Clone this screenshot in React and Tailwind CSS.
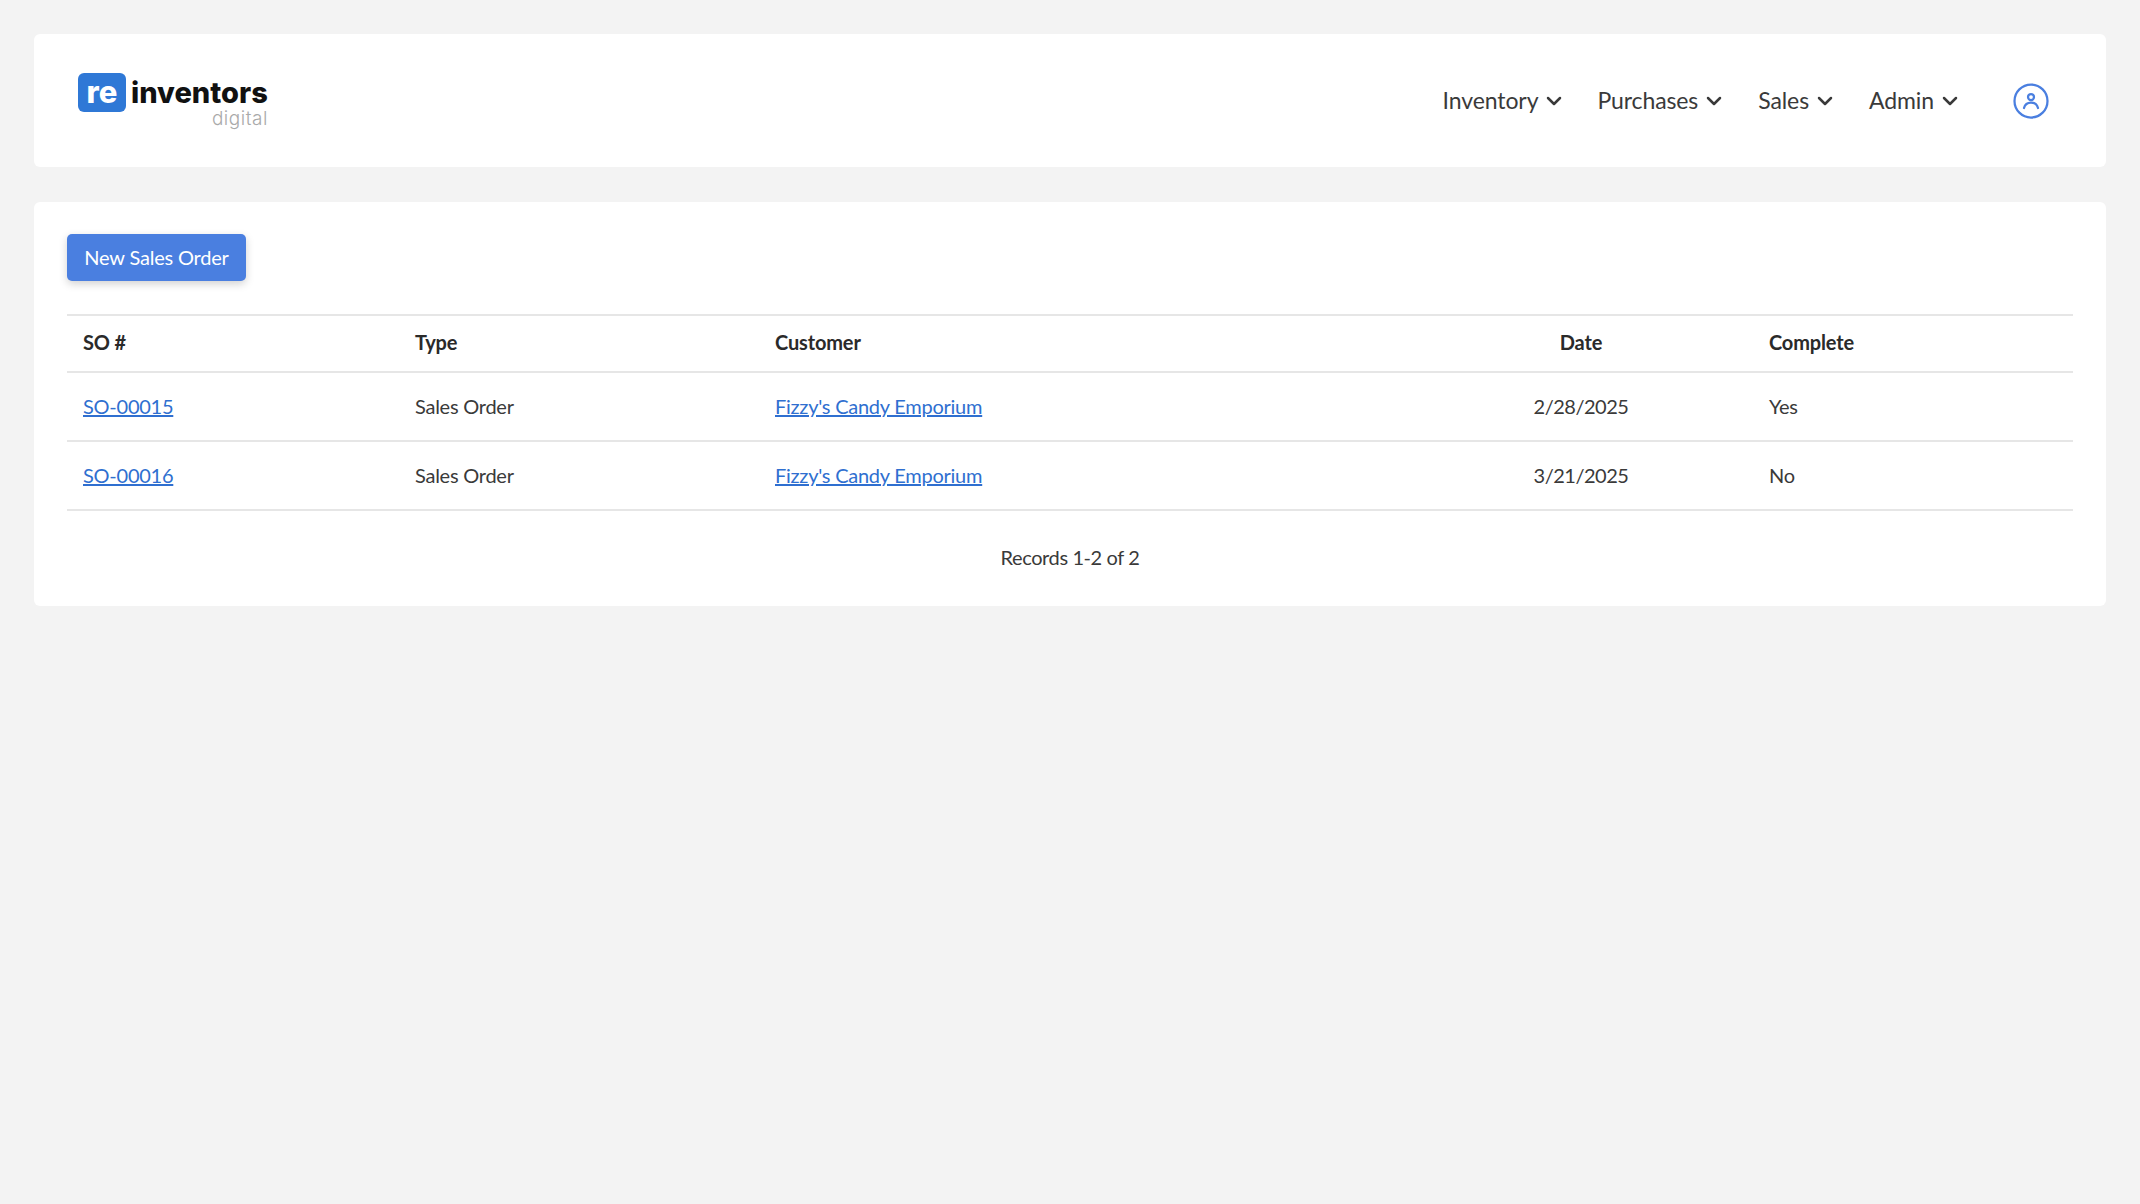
import { ChevronDown } from 'lucide-react'

const NAV = [
  { label: 'Inventory', gap: 'mr-[31px]' },
  { label: 'Purchases', gap: 'mr-[32px]' },
  { label: 'Sales', gap: 'mr-[32px]' },
  { label: 'Admin', gap: 'mr-[51px]' },
]

const ROWS = [
  { so: 'SO-00015', date: '2/28/2025', complete: 'Yes' },
  { so: 'SO-00016', date: '3/21/2025', complete: 'No' },
]

export default function App() {
  return (
    <div className="min-h-[1204px] bg-[#f3f3f3] px-[34px] pt-[34px] font-['Lato','Liberation_Sans',sans-serif] text-[#3a3a3a]">
      <header className="flex h-[133px] items-center justify-between rounded-md bg-white pl-[44px] pr-[57px]">
        <div className="flex flex-col">
          <div className="flex items-center gap-[5px]">
            <span className="flex h-[39px] w-[48px] items-center justify-center rounded-md bg-[#2f78d6] pb-[3px] font-['Inter',sans-serif] text-[31px] font-extrabold leading-none text-white">re</span>
            <span className="font-['Inter',sans-serif] text-[29px] font-extrabold leading-none text-[#111]">inventors</span>
          </div>
          <span className="-mt-[3px] self-end font-['Inter',sans-serif] text-[19px] font-light leading-none tracking-[0.5px] text-[#aaaaaa]">digital</span>
        </div>
        <nav className="flex items-center text-[23px] tracking-[-0.1px]">
          {NAV.map(({ label, gap }) => (
            <span key={label} className={`flex items-center gap-[4px] ${gap}`}>
              {label}
              <ChevronDown size={24} strokeWidth={2.5} />
            </span>
          ))}
          <svg width="36" height="36" viewBox="0 0 36 36" fill="none" stroke="#4a7fe0" strokeWidth="2.25">
            <circle cx="18" cy="18" r="16.5" />
            <circle cx="18" cy="14" r="3" />
            <path d="M11 25c1-4 4-5.5 7-5.5s6 1.5 7 5.5" strokeLinecap="round" />
          </svg>
        </nav>
      </header>

      <main className="mt-[35px] h-[404px] rounded-md bg-white px-[33px] pt-[32px]">
        <button className="h-[47px] w-[179px] rounded-[5px] bg-[#4a7fe0] pb-[2px] text-[20px] tracking-[-0.2px] text-white shadow-[0_3px_8px_rgba(0,0,0,0.18)]">
          New Sales Order
        </button>
        <table className="mt-[33px] w-full table-fixed border-collapse text-[20px] tracking-[-0.25px]">
          <colgroup>
            <col className="w-[332px]" />
            <col className="w-[360px]" />
            <col className="w-[650px]" />
            <col className="w-[344px]" />
            <col />
          </colgroup>
          <thead>
            <tr className="h-[57px] border-y-2 border-[#e6e6e6] text-[#2a2a2a]">
              <th className="px-4 pb-[3px] text-left font-bold tracking-[-0.15px]">SO #</th>
              <th className="px-4 pb-[3px] text-left font-bold tracking-[-0.15px]">Type</th>
              <th className="px-4 pb-[3px] text-left font-bold tracking-[-0.15px]">Customer</th>
              <th className="px-4 pb-[3px] text-center font-bold tracking-[-0.15px]">Date</th>
              <th className="px-4 pb-[3px] text-left font-bold tracking-[-0.15px]">Complete</th>
            </tr>
          </thead>
          <tbody>
            {ROWS.map(r => (
              <tr key={r.so} className="h-[69px] border-b-2 border-[#e6e6e6]">
                <td className="px-4 pb-[2px]"><a href="#" className="text-[#2f6fd0] underline">{r.so}</a></td>
                <td className="px-4 pb-[2px]">Sales Order</td>
                <td className="px-4 pb-[2px]"><a href="#" className="text-[#2f6fd0] underline">Fizzy's Candy Emporium</a></td>
                <td className="px-4 pb-[2px] text-center tracking-[-0.5px]">{r.date}</td>
                <td className="px-4 pb-[2px]">{r.complete}</td>
              </tr>
            ))}
          </tbody>
        </table>
        <p className="mt-[31px] text-center text-[20px] tracking-[-0.4px]">Records 1-2 of 2</p>
      </main>
    </div>
  )
}
